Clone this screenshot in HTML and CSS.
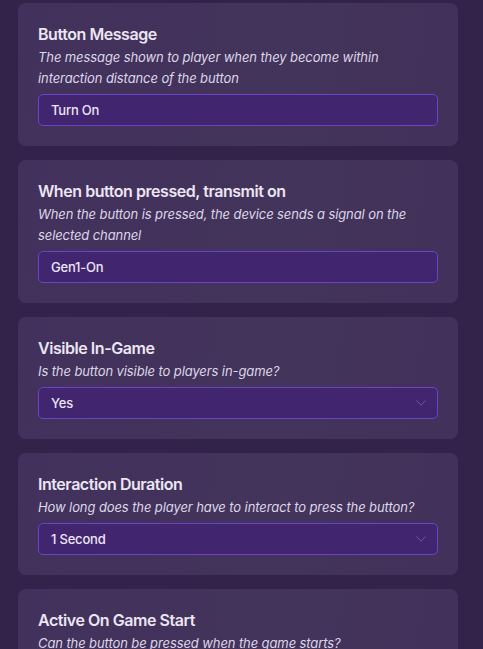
FILE: index.html
```html
<!DOCTYPE html>
<html>
<head>
<meta charset="utf-8">
<link rel="stylesheet" href="styles.css">
</head>
<body>
<div class="list">
  <section class="card">
    <h2 class="title">Button Message</h2>
    <p class="desc">The message shown to player when they become within interaction distance of the button</p>
    <div class="field">Turn On</div>
  </section>
  <section class="card">
    <h2 class="title">When button pressed, transmit on</h2>
    <p class="desc">When the button is pressed, the device sends a signal on the selected channel</p>
    <div class="field">Gen1-On</div>
  </section>
  <section class="card">
    <h2 class="title">Visible In-Game</h2>
    <p class="desc">Is the button visible to players in-game?</p>
    <div class="field select"><span>Yes</span>
      <svg class="chev" width="10" height="6" viewBox="0 0 10 6"><path d="M0.5 0.5 L5 5.2 L9.5 0.5" fill="none" stroke="#6f56a6" stroke-width="1"/></svg>
    </div>
  </section>
  <section class="card">
    <h2 class="title">Interaction Duration</h2>
    <p class="desc">How long does the player have to interact to press the button?</p>
    <div class="field select"><span>1 Second</span>
      <svg class="chev" width="10" height="6" viewBox="0 0 10 6"><path d="M0.5 0.5 L5 5.2 L9.5 0.5" fill="none" stroke="#6f56a6" stroke-width="1"/></svg>
    </div>
  </section>
  <section class="card">
    <h2 class="title">Active On Game Start</h2>
    <p class="desc">Can the button be pressed when the game starts?</p>
    <div class="field select"><span>Yes</span>
      <svg class="chev" width="10" height="6" viewBox="0 0 10 6"><path d="M0.5 0.5 L5 5.2 L9.5 0.5" fill="none" stroke="#6f56a6" stroke-width="1"/></svg>
    </div>
  </section>
</div>
</body>
</html>
```
FILE: styles.css
```css
html, body {
  margin: 0;
  padding: 0;
  background: #33234a;
  overflow: hidden;
}
body {
  font-family: Inter, "Noto Sans", sans-serif;
}
.list {
  display: flex;
  flex-direction: column;
  gap: 14px;
  padding: 3px 25px 0 18px;
}
.card {
  background: linear-gradient(100deg, #42315c 0%, #43345b 60%, #42315a 100%);
  border-radius: 8px;
  padding: 20px 20px 20px 20px;
  display: flex;
  flex-direction: column;
}
.title {
  margin: 0 0 2px 0;
  font-size: 16px;
  line-height: 22px;
  font-weight: 600;
  color: #ebe6f2;
  letter-spacing: -0.45px;
}
.desc {
  margin: 0 0 5px 0;
  font-size: 13px;
  line-height: 21px;
  font-style: italic;
  color: #ddd6e8;
  letter-spacing: -0.1px;
}
.field {
  box-sizing: border-box;
  height: 32px;
  border: 1px solid #6a43c6;
  border-radius: 5px;
  background: #42256f;
  color: #ece6f5;
  font-size: 13px;
  font-weight: 500;
  letter-spacing: -0.2px;
  padding: 0 11px 0 12px;
  display: flex;
  align-items: center;
}
.select {
  justify-content: space-between;
}
```
